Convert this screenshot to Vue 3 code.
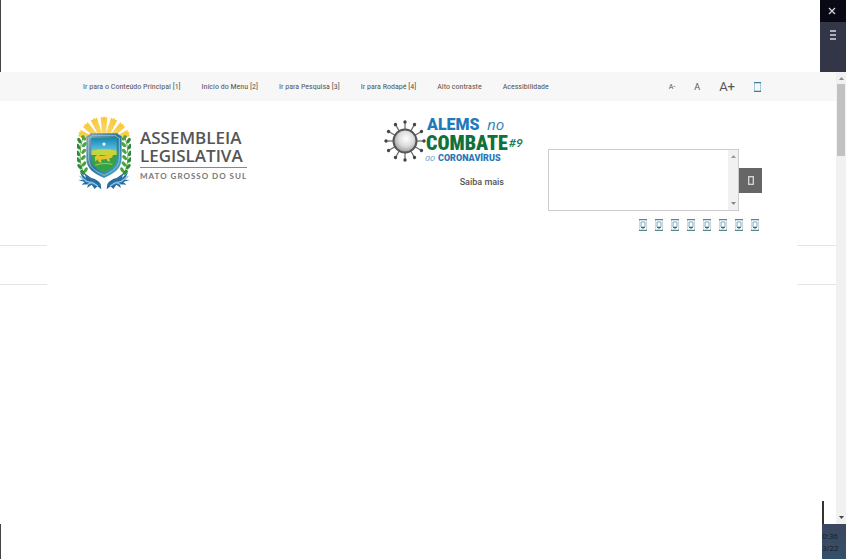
<script setup>
import { ref } from 'vue'

const query = ref('')
const shortcuts = [
  'Ir para o Conteúdo Principal [1]',
  'Início do Menu [2]',
  'Ir para Pesquisa [3]',
  'Ir para Rodapé [4]',
  'Alto contraste',
  'Acessibilidade',
]
const socials = ['Facebook', 'Twitter', 'Instagram', 'YouTube', 'Flickr', 'SoundCloud', 'WhatsApp', 'RSS']
const rays = [-66, -44, -22, 0, 22, 44, 66]
const spikes = Array.from({ length: 12 }, (_, i) => i * 30)
const leaves = [
  [42, 84, -40], [29, 92, -25], [44, 104, 40], [26, 110, -25], [42, 124, 45],
  [25, 130, -25], [41, 143, 45], [26, 150, -30], [43, 162, 40], [30, 170, -35], [48, 180, 30], [39, 187, -45],
]
</script>

<template>
  <div class="screen">
    <div class="strip top">
      <div class="panel">
        <button class="close" aria-label="Fechar">
          <svg width="8" height="8" viewBox="0 0 8 8"><path d="M1 1l6 6M7 1L1 7" stroke="#d5d5dc" stroke-width="1.3" /></svg>
        </button>
        <button class="menu" aria-label="Menu">
          <svg width="7" height="10" viewBox="0 0 7 10"><path d="M0 1h6M0 5h6M0 9h6" stroke="#d8dae2" stroke-width="1.500" /></svg>
        </button>
      </div>
    </div>

    <div class="window">
      <div class="page">
        <nav class="access">
          <a v-for="s in shortcuts" :key="s" href="#">{{ s }}</a>
          <div class="sizes">
            <button class="small" aria-label="Diminuir fonte">A-</button>
            <button class="normal" aria-label="Fonte normal">A</button>
            <button class="large" aria-label="Aumentar fonte">A+</button>
            <a href="#" class="device" aria-label="Versão móvel">
              <svg width="7" height="10" viewBox="0 0 7 10"><path d="M.5 1v8M6.5 1v8" stroke="#a9cadb" /><path d="M0 .7h7M0 9.3h7" stroke="#3e7d9c" stroke-width="1.2" /></svg>
            </a>
          </div>
        </nav>

        <header class="head">
          <a href="#" class="brand">
            <svg class="arms" width="54" height="74" viewBox="22 18 162 222" aria-hidden="true">
              <defs>
                <linearGradient id="rim" x1="0" y1="0" x2="1" y2="1">
                  <stop offset="0" stop-color="#8ba9b5" /><stop offset=".5" stop-color="#2a74a4" /><stop offset="1" stop-color="#4fb4cf" />
                </linearGradient>
                <linearGradient id="sky" x1="0" y1="0" x2="0" y2="1">
                  <stop offset="0" stop-color="#1688bb" /><stop offset="1" stop-color="#62c5df" />
                </linearGradient>
                <linearGradient id="ray" x1="0" y1="0" x2="0" y2="1">
                  <stop offset="0" stop-color="#f8c83a" /><stop offset="1" stop-color="#fbdf7c" />
                </linearGradient>
                <g id="side">
                  <path d="M42 76Q22 132 38 180Q46 197 58 204" fill="none" stroke="#62a647" stroke-width="3" />
                  <ellipse v-for="(l, i) in leaves" :key="i" :cx="l[0]" :cy="l[1]" rx="5" ry="9" :transform="`rotate(${l[2]} ${l[0]} ${l[1]})`" :fill="i % 2 ? '#2f8b3c' : '#4aa43f'" />
                  <path d="M25 194L40 207L30 185L49 204L45 190L65 204Q84 208 93 222L95 238L83 229L75 237L66 224L52 234L56 223L36 224L45 216L26 210L40 209Z" fill="#286ca0" />
                  <path d="M31 199L51 214L76 221M51 225L66 217L85 228" fill="none" stroke="#8cc6de" stroke-width="4" />
                </g>
              </defs>
              <path v-for="r in rays" :key="r" d="M99 96L93 20L99 23L103 18L107 23L113 20L107 96Z" fill="url(#ray)" :transform="`rotate(${r} 103 102)`" />
              <use href="#side" />
              <use href="#side" transform="translate(206 0) scale(-1 1)" />
              <path d="M50 78Q57 79 62 70H144Q149 79 156 78V145C156 178 133 190 103 204C73 190 50 178 50 145Z" fill="url(#rim)" />
              <path d="M57 84Q64 84 68 77H138Q142 84 149 84V145C149 172 129 184 103 196C77 184 57 172 57 145Z" fill="none" stroke="#b2d7df" stroke-width="2" />
              <path d="M65 85H141V146C141 168 122 179 103 187C83 179 65 168 65 146Z" fill="#35a24a" />
              <path d="M65 85H141V123H65Z" fill="url(#sky)" />
              <path d="M65 122Q103 114 141 122V135H65Z" fill="#c2d63e" />
              <path d="M97 101L101 100L103 96L105 100L109 101L106 104L107 108L103 106L99 108L100 104Z" fill="#fff" />
              <path d="M75 141L83 134L94 138L110 136L122 130L131 133L127 143L119 145L121 155L113 153L111 147L94 149L96 158L87 156L84 148L77 155Z" fill="#e3c62c" />
              <path d="M77 165Q103 156 128 163" fill="none" stroke="#8fc54a" stroke-width="4" />
            </svg>
            <span class="words">
              <span class="title">ASSEMBLEIA</span>
              <span class="title">LEGISLATIVA</span>
              <span class="state">MATO GROSSO DO SUL</span>
            </span>
          </a>

          <div class="campaign">
            <a href="#" aria-label="ALEMS no combate ao coronavírus">
              <svg class="banner" width="140" height="50" viewBox="0 0 140 50">
                <defs>
                  <radialGradient id="orb" cx=".55" cy=".4" r=".6">
                    <stop offset="0" stop-color="#fff" /><stop offset=".55" stop-color="#dcdcdc" /><stop offset="1" stop-color="#999" />
                  </radialGradient>
                </defs>
                <g v-for="a in spikes" :key="a" :transform="`rotate(${a} 19 25)`">
                  <path d="M19 14V7" stroke="#666" stroke-width="1.2" /><circle cx="19" cy="6" r="1.700" fill="#444" />
                </g>
                <circle cx="19" cy="25" r="11.500" fill="url(#orb)" stroke="#555" stroke-width="2" />
                <text x="41" y="14" class="alems">ALEMS</text>
                <text x="101" y="14" class="no">no</text>
                <text x="40" y="34" class="combate">COMBATE</text>
                <text x="123" y="31" class="tag">#9</text>
                <text x="39" y="45" class="ao">ao</text>
                <text x="52" y="45" class="corona">CORONAVÍRUS</text>
              </svg>
            </a>
            <a href="#" class="more">Saiba mais</a>
          </div>

          <div class="tools">
            <form class="search" @submit.prevent>
              <div class="field">
                <textarea v-model="query" aria-label="Pesquisar"></textarea>
                <div class="track">
                  <svg width="5" height="3" viewBox="0 0 5 3"><path d="M0 3L2.500 0L5 3Z" fill="#999" /></svg>
                  <svg width="5" height="3" viewBox="0 0 5 3"><path d="M0 0L2.500 3L5 0Z" fill="#888" /></svg>
                </div>
              </div>
              <button class="go" aria-label="Buscar">
                <svg width="6" height="9" viewBox="0 0 6 9"><rect x=".7" y=".7" width="4.600" height="7.600" fill="none" stroke="#e4e4e4" stroke-width="1.2" /></svg>
              </button>
            </form>
            <div class="socials">
              <a v-for="s in socials" :key="s" href="#" :aria-label="s">
                <svg width="8" height="12" viewBox="0 0 8 12">
                  <path d="M.5 1v10M7.500 1v10" stroke="#c9dde3" />
                  <path d="M0 .7h8M0 11.300h8" stroke="#5b8794" stroke-width="1.3" />
                  <path d="M2 3h4v5H2z" fill="none" stroke="#7fabb8" />
                  <path d="M2 8.500h4M3 9h2" stroke="#376d7d" />
                </svg>
              </a>
            </div>
          </div>
        </header>

        <div class="band"><span></span><span></span></div>
        <main class="body"></main>
      </div>
      <div class="scroll">
        <svg width="5" height="3" viewBox="0 0 5 3"><path d="M0 3L2.500 0L5 3Z" fill="#888" /></svg>
        <div class="thumb"></div>
        <svg class="down" width="5" height="3" viewBox="0 0 5 3"><path d="M0 0L2.500 3L5 0Z" fill="#444" /></svg>
      </div>
    </div>

    <div class="strip bottom">
      <div class="clock"><span>0:36</span><span>3/22</span></div>
    </div>
  </div>
</template>

<style>
body { background: #fff; }
</style>

<style scoped>
.screen {
  min-height: 100vh;
  display: flex;
  flex-direction: column;
  font-family: Roboto, "Liberation Sans", sans-serif;
  color: #555;
}
a { color: inherit; text-decoration: none; }
button { border: 0; padding: 0; background: none; color: inherit; font-family: inherit; }
svg { display: block; }
.banner { overflow: visible; }
.strip { display: flex; justify-content: flex-end; border-left: 1px solid #444; }
.top { height: 72px; }
.panel { width: 26px; display: flex; flex-direction: column; background: #323647; }
.close { height: 22px; padding-right: 3px; background: #080914; display: flex; align-items: center; justify-content: center; }
.menu { height: 26px; display: flex; align-items: center; justify-content: center; }
.window { flex: 1; display: flex; }
.page { flex: 1; display: flex; flex-direction: column; }
.access {
  height: 29px;
  padding: 0 75px 0 83px;
  background: #f7f7f7;
  display: flex;
  align-items: center;
  gap: 21px;
  font-family: "Roboto Condensed", "Liberation Sans Narrow", Roboto, sans-serif;
  font-size: 8px;
  white-space: nowrap;
}
.sizes { margin-left: auto; display: flex; align-items: center; gap: 19px; font-family: Roboto, sans-serif; }
.small { font-size: 7px; }
.normal { font-size: 9px; }
.large { font-size: 13px; }
.head { display: flex; align-items: flex-start; padding: 15px 74px 0 77px; }
.brand { display: flex; gap: 9px; }
.words { padding-top: 13px; display: flex; flex-direction: column; }
.title { font: 600 17px/18px "Open Sans", sans-serif; color: #555; }
.state {
  margin-top: 2px;
  padding-top: 3px;
  border-top: 1px solid #5b9c93;
  font: 700 8px/10px Lato, sans-serif;
  letter-spacing: 1px;
  white-space: nowrap;
  color: #777;
}
.campaign { margin-left: auto; width: 140px; display: flex; flex-direction: column; }
.alems { font: 900 16px Roboto, sans-serif; fill: #1f79bd; }
.no { font: italic 15px "Open Sans", sans-serif; fill: #3182bd; }
.combate { font: 900 20px "Roboto Condensed", sans-serif; fill: #11713a; }
.tag { font: italic bold 12px Lato, sans-serif; fill: #23824a; }
.ao { font: italic 9px "Open Sans", sans-serif; fill: #69a5cd; }
.corona { font: 900 9px Roboto, sans-serif; fill: #2878b8; }
.more { align-self: flex-end; margin: 10px 22px 0 0; font: 500 9px/12px Roboto, sans-serif; }
.tools { margin-left: 22px; padding-top: 33px; width: 214px; }
.search { display: flex; align-items: center; }
.field { flex: 1; height: 60px; display: flex; border: 1px solid #ccc; }
textarea { flex: 1; min-width: 0; border: 0; padding: 4px; resize: none; outline: 0; overflow: hidden; background: #fff; font: 11px Roboto, sans-serif; }
.track { width: 10px; padding: 5px 0; background: #f1f1f1; display: flex; flex-direction: column; justify-content: space-between; align-items: center; }
.go { width: 23px; height: 25px; background: #666; display: flex; align-items: center; justify-content: center; }
.socials { display: flex; justify-content: flex-end; gap: 8px; padding: 8px 3px 0 0; }
.band { margin-top: 14px; height: 40px; display: flex; justify-content: space-between; }
.band span { width: 47px; border: 1px solid #e4e4e4; border-width: 1px 0; box-sizing: border-box; }
.band span:last-child { width: 39px; }
.body { flex: 1; }
.scroll { width: 10px; padding: 5px 0; background: #f1f1f1; display: flex; flex-direction: column; align-items: center; }
.thumb { width: 8px; height: 72px; margin-top: 4px; background: #c1c1c1; }
.down { margin-top: auto; }
.bottom { height: 35px; }
.clock {
  width: 24px;
  padding-top: 6px;
  display: flex;
  flex-direction: column;
  background: linear-gradient(#3c4660, #34506a);
  color: #161c28;
  font: 8px/12px "Open Sans", sans-serif;
  position: relative;
}
.clock::before { content: ""; position: absolute; left: 0; bottom: 100%; width: 2px; height: 23px; background: #333; }
</style>
